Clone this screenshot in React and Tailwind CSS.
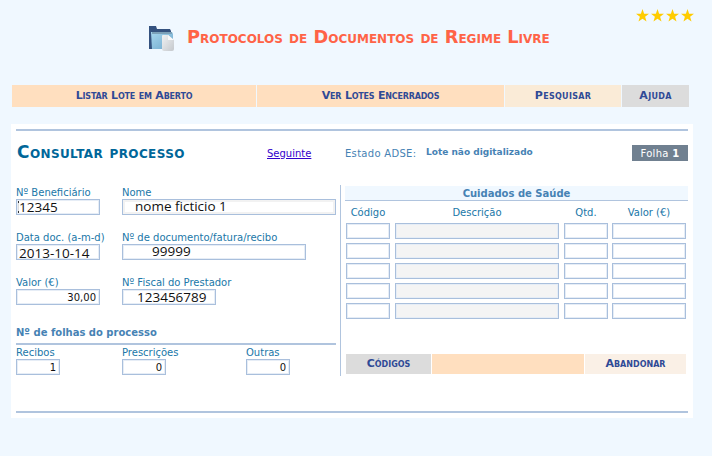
import React from "react";

const sans = "font-['DejaVu_Sans',Verdana,sans-serif]";
const inputFont = "font-['Open_Sans',sans-serif]";

const FolderIcon = () => (
  <svg width="28" height="28" viewBox="0 0 28 28" className="shrink-0">
    <defs>
      <linearGradient id="front" x1="0" y1="0" x2="1" y2="1">
        <stop offset="0" stopColor="#a6d6ee" />
        <stop offset="1" stopColor="#6fa8cc" />
      </linearGradient>
      <linearGradient id="page" x1="0" y1="0" x2="1" y2="1">
        <stop offset="0" stopColor="#f0f2f4" />
        <stop offset="1" stopColor="#c4c8cc" />
      </linearGradient>
    </defs>
    <path d="M1 2h7l1 3h13l1 2v18H1z" fill="#34527f" />
    <path d="M3 8h21l1 2v15H4z" fill="url(#front)" />
    <path d="M4 8h20v2H4z" fill="#7ba0b8" />
    <path d="M14 12q0-1 1-1h5l6 5v9q0 2-2 2h-8q-2 0-2-2z" fill="url(#page)" />
    <path d="M20 11v5h6z" fill="#f8f9fa" />
  </svg>
);

const NavItem = ({ bg, width, tracking = "", children }) => (
  <div className={`${bg} ${width} ${tracking} flex h-full items-center justify-center text-[11px] font-bold text-[#2f4a96] [font-variant:small-caps]`}>
    {children}
  </div>
);

const Label = ({ children }) => (
  <div className="h-[14px] pt-px text-[10px] leading-[14px] text-[#2077a8] whitespace-nowrap">{children}</div>
);

const TextBox = ({ value = "", width, className = "" }) => (
  <input
    readOnly
    value={value}
    className={`${width} block h-4 border border-[#a9bfdc] bg-white text-[#111] shadow-[inset_0_0_0_1px_#e6edf6] outline-none ${className}`}
  />
);

const Field = ({ label, value, column, width, className }) => (
  <div className={column}>
    <Label>{label}</Label>
    <TextBox value={value} width={width} className={className} />
  </div>
);

const bigText = `${inputFont} text-[13.5px] leading-none`;
const numText = "text-[10px] text-right pr-[3px]";

const CareRow = () => (
  <div className="flex">
    <TextBox width="w-[44px]" />
    <TextBox width="w-[164px]" className="ml-[5px] !bg-[#f4f4f4]" />
    <TextBox width="w-[44px]" className="ml-[5px]" />
    <TextBox width="w-[74px]" className="ml-1" />
  </div>
);

export default function App() {
  return (
    <div className={`${sans} h-[456px] w-[712px] overflow-hidden bg-[#f0f8ff]`}>
      {/* Header */}
      <header className="flex h-[85px] items-start">
        <div className="ml-[148px] mt-6 flex items-center">
          <FolderIcon />
          <h1 className="ml-[11px] pb-[2px] text-[17.8px] font-bold leading-[26px] text-[#ff6347] whitespace-nowrap [font-variant:small-caps]">
            Protocolos de Documentos de Regime Livre
          </h1>
        </div>
        <div className="ml-auto mr-[18px] mt-[5px] flex gap-[2px] text-[#ffcc00]">
          {[0, 1, 2, 3].map((i) => (
            <svg key={i} width="13" height="13" viewBox="0 0 24 24" className="mt-1" fill="currentColor">
              <path d="M12 0l3 8.600 9 .2-7.200 5.500 2.600 8.700L12 17.800 4.600 23l2.600-8.700L0 8.800l9-.2z" />
            </svg>
          ))}
        </div>
      </header>

      {/* Menu */}
      <nav className="ml-3 flex h-[22px] w-[677px] gap-px">
        <NavItem bg="bg-[#ffdfbf]" width="w-[244px]" tracking="tracking-[-0.2px]">Listar Lote em Aberto</NavItem>
        <NavItem bg="bg-[#ffdfbf]" width="w-[247px]" tracking="tracking-[-0.2px]">Ver Lotes Encerrados</NavItem>
        <NavItem bg="bg-[#faebd7]" width="w-[116px]" tracking="tracking-[0.3px]">Pesquisar</NavItem>
        <NavItem bg="bg-[#dcdcdc]" width="w-[67px]" tracking="tracking-[0.3px]">Ajuda</NavItem>
      </nav>

      {/* Panel */}
      <main className="ml-[11px] mt-[17px] h-[294px] w-[682px] bg-white pl-[5px] pt-[5px]">
        <div className="h-[2px] w-[672px] bg-[#b0c4de]" />

        <div className="flex h-[44px] w-[672px] items-center">
          <h2 className="w-[250px] pl-px text-[17px] font-bold tracking-[0.4px] text-[#006699] whitespace-nowrap [font-variant:small-caps]">
            Consultar processo
          </h2>
          <a href="#" className="ml-px w-[78px] text-[10px] text-[#3300cc] underline">Seguinte</a>
          <span className="w-[81px] text-[10px] tracking-[0.3px] text-[#4682b4] whitespace-nowrap">Estado ADSE:</span>
          <span className="text-[9px] font-bold text-[#4682b4] whitespace-nowrap">Lote não digitalizado</span>
          <span className="ml-auto flex h-4 w-14 items-center justify-center bg-[#708090] text-[10px] tracking-[0.3px] text-white">
            Folha&nbsp;<b>1</b>
          </span>
        </div>

        <div className="mt-[10px] flex h-[191px]">
          {/* Left form */}
          <section className="w-[320px]">
            <div className="flex">
              <div className="relative">
                <Field label="Nº Beneficiário" value="12345" column="w-[106px]" width="w-[84px]" className={`${bigText} pl-[2px]`} />
                {/* text cursor left in the box */}
                <span className="absolute left-[2px] top-4 h-3 w-px bg-[linear-gradient(#333_20%,#ddd_20%,#ddd_85%,#333_85%)]" />
              </div>
              <Field label="Nome" value="nome ficticio 1" column="w-[214px]" width="w-[214px]" className={`${bigText} pb-[2px] pl-3 !shadow-[inset_0_0_0_2px_#f2f2f2]`} />
            </div>
            <div className="mt-[15px] flex">
              <Field label="Data doc. (a-m-d)" value="2013-10-14" column="w-[106px]" width="w-[84px]" className={`${bigText} pl-[2px] pt-px`} />
              <Field label="Nº de documento/fatura/recibo" value="99999" column="w-[214px]" width="w-[184px]" className={`${bigText} pb-[3px] pl-[29px]`} />
            </div>
            <div className="mt-[15px] flex">
              <Field label="Valor (€)" value="30,00" column="w-[106px]" width="w-[84px]" className={numText} />
              <Field label="Nº Fiscal do Prestador" value="123456789" column="w-[214px]" width="w-[94px]" className={`${bigText} pl-[14px]`} />
            </div>

            <h3 className="mt-5 h-[14px] pt-px text-[10px] font-bold leading-[14px] text-[#4682b4]">Nº de folhas do processo</h3>
            <div className="mt-1 h-[2px] bg-[#b0c4de]" />
            <div className="flex">
              <Field label="Recibos" value="1" column="w-[106px]" width="w-[44px]" className={numText} />
              <Field label="Prescrições" value="0" column="w-[124px]" width="w-[44px]" className={numText} />
              <Field label="Outras" value="0" column="w-[44px]" width="w-[44px]" className={numText} />
            </div>
          </section>

          <div className="ml-1 w-px bg-[#b0c4de]" />

          {/* Right table */}
          <section className="ml-1 w-[343px]">
            <h3 className="mt-px h-[15px] border-b border-[#b0c4de] bg-[#f0f8ff] pt-px text-center text-[10px] font-bold leading-[14px] text-[#4682b4]">
              Cuidados de Saúde
            </h3>
            <div className="ml-px flex h-[22px] items-center text-center text-[10px] text-[#2077a8]">
              <span className="w-[44px]">Código</span>
              <span className="ml-[5px] w-[164px]">Descrição</span>
              <span className="ml-[5px] w-[44px]">Qtd.</span>
              <span className="ml-1 w-[74px]">Valor (€)</span>
            </div>
            <div className="ml-px flex flex-col gap-1">
              {[0, 1, 2, 3, 4].map((i) => <CareRow key={i} />)}
            </div>
            <div className="ml-px mt-[35px] flex h-5 w-[340px] gap-px text-[11px] font-bold text-[#2f4a96] [font-variant:small-caps]">
              <div className="flex w-[85px] items-center justify-center bg-[#dcdcdc]">Códigos</div>
              <div className="w-[152px] bg-[#ffdfbf]" />
              <div className="flex w-[101px] items-center justify-center bg-[#faf0e6]">Abandonar</div>
            </div>
          </section>
        </div>

        <div className="mt-[35px] h-[2px] w-[672px] bg-[#b0c4de]" />
      </main>
    </div>
  );
}
